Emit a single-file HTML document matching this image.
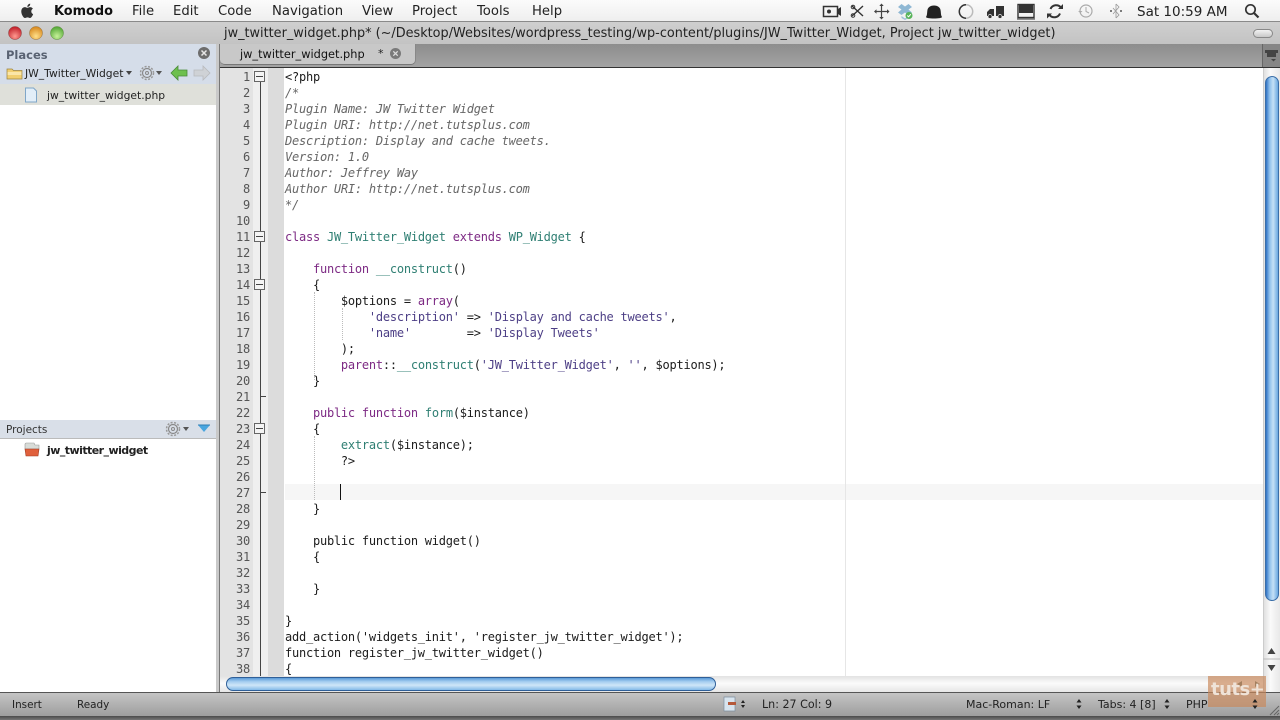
<!DOCTYPE html>
<html><head><meta charset="utf-8"><style>
html,body{margin:0;padding:0;width:1280px;height:720px;overflow:hidden;background:#fff}
body{position:relative;font-family:"DejaVu Sans","Liberation Sans",sans-serif;color:#222}
.a{position:absolute}
.t{position:absolute;white-space:pre;line-height:16px}
.m{font-size:13.2px;top:4px;color:#222}
pre{margin:0;font-family:"DejaVu Sans Mono","Liberation Mono",monospace;font-size:12px;letter-spacing:-.235px;line-height:16px;position:absolute}
.k{color:#7d2a84}.f{color:#2f7f73}.s{color:#4d3f86}.c{color:#666;font-style:italic}.d{color:#1c1c1c}
.s1{font-size:11px;color:#222}
</style></head><body>
<!-- menu bar -->
<div class="a" style="left:0;top:0;width:1280px;height:22px;background:linear-gradient(#fbfbfb,#eeeeee)"></div>
<svg class="a" style="left:19px;top:2px" width="18" height="18" viewBox="0 0 18 18"><path d="M12.3 9.4c0-1.8 1.5-2.7 1.6-2.8-.9-1.3-2.2-1.4-2.7-1.5-1.1-.1-2.2.7-2.8.7s-1.5-.7-2.4-.7C4.700 5.100 3.500 5.800 2.900 6.900 1.600 9.100 2.600 12.400 3.800 14.200c.6.900 1.400 1.900 2.300 1.800.9 0 1.300-.6 2.400-.6s1.400.6 2.400.6 1.600-.9 2.200-1.800c.7-1 1-2 1-2.100-.1 0-1.800-.7-1.800-2.700zM10.500 3.900c.5-.6.800-1.400.7-2.300-.7 0-1.600.5-2.100 1.100-.5.5-.9 1.400-.8 2.200.8.100 1.700-.4 2.200-1z" fill="#333"/></svg>
<div class="t m" style="left:54px;font-weight:bold;font-size:12.900px;color:#111">Komodo</div>
<div class="t m" style="left:132px">File</div>
<div class="t m" style="left:173px">Edit</div>
<div class="t m" style="left:218px">Code</div>
<div class="t m" style="left:272px">Navigation</div>
<div class="t m" style="left:362px">View</div>
<div class="t m" style="left:412px">Project</div>
<div class="t m" style="left:477px">Tools</div>
<div class="t m" style="left:532px">Help</div>
<!-- status icons -->
<svg class="a" style="left:820px;top:0" width="330" height="22" viewBox="820 0 330 22">
<rect x="823.500" y="6.500" width="14" height="10" fill="none" stroke="#333" stroke-width="1.500"/><circle cx="829" cy="11.500" r="2" fill="#333"/><path d="M838 9l3-2v9l-3-2z" fill="#333"/>
<path d="M852 6l11 10M863 6l-11 10" stroke="#333" stroke-width="1.400"/><circle cx="853" cy="15.500" r="1.800" fill="none" stroke="#333"/><circle cx="853" cy="7" r="1.800" fill="none" stroke="#333"/>
<path d="M881.500 4.500v14M875 11.500h14" stroke="#444" stroke-width="1.200"/><path d="M881.500 3.500l-2.200 2.500h4.400zM881.500 19.500l-2.200-2.500h4.400zM874 11.500l2.500-2.200v4.400zM889.500 11.500l-2.500-2.200v4.400z" fill="#444"/>
<path d="M898 7l3.500-3 3.500 2.500L908.500 4l3.500 3-3.500 2.500 3.500 3-3.500 2.500-3.500-2.500-3.500 2.500-3.500-2.500 3.500-3z" fill="#8fb8d4"/><path d="M901.500 16l3.500 2.500 3.500-2.500v2l-3.500 2-3.500-2z" fill="#9cc0d8"/><circle cx="909" cy="15.500" r="3.500" fill="#58b45a"/><path d="M907.300 15.500l1.300 1.300 2.200-2.600" stroke="#fff" stroke-width="1" fill="none"/>
<path d="M926 17c1-1.500 1-3 1.300-6 .3-3.500 2.700-5.500 6.700-5.500s6.400 2 6.700 5.500c.3 3 .3 4.500 1.300 6 0 1-3.500 1.500-8 1.500s-8-.5-8-1.500z" fill="#222"/>
<circle cx="966" cy="11.500" r="6.700" fill="none" stroke="#bbb" stroke-width="1.500"/><path d="M966 4.800a6.700 6.700 0 0 0 0 13.400" fill="none" stroke="#333" stroke-width="1.500"/>
<path d="M996 6h8v10h-8zM994 9h-4l-3 3v4h7z" fill="#333"/><circle cx="990" cy="16.500" r="2" fill="#333" stroke="#eee" stroke-width=".7"/><circle cx="1000" cy="16.500" r="2" fill="#333" stroke="#eee" stroke-width=".7"/>
<rect x="1018" y="4.500" width="16" height="13" fill="none" stroke="#333" stroke-width="1.400"/><rect x="1019" y="5" width="14" height="8" fill="#333"/><path d="M1017 19h18" stroke="#333"/>
<path d="M1061 7.500a6.200 6.200 0 0 0-10.500 1.500M1049.500 15a6.200 6.200 0 0 0 10.500-1.500" fill="none" stroke="#333" stroke-width="2"/><path d="M1058 9h5V4zM1052 13.500h-5v5z" fill="#333"/>
<circle cx="1086" cy="11" r="6" fill="none" stroke="#aaa" stroke-width="1.200"/><path d="M1086 7v4.500l3 1.500" fill="none" stroke="#aaa"/><path d="M1078 11l2.500 2 2-2z" fill="#aaa"/>
<path d="M1116 4v14M1116 4l3 3-6 7M1116 18l3-3-6-7" fill="none" stroke="#999" stroke-width=".8"/><circle cx="1111" cy="11" r="1" fill="#555"/><circle cx="1121" cy="11" r="1" fill="#555"/>
</svg>
<div class="t m" style="left:1137px;font-size:13.500px;color:#222">Sat 10:59 AM</div>
<svg class="a" style="left:1244px;top:3px" width="16" height="16" viewBox="0 0 16 16"><circle cx="6.500" cy="6.500" r="4.700" fill="none" stroke="#333" stroke-width="1.700"/><path d="M10 10l4.500 4.500" stroke="#333" stroke-width="2.200"/></svg>
<div class="a" style="left:0;top:21px;width:1280px;height:1px;background:#8a8a8a"></div>
<!-- title bar -->
<div class="a" style="left:0;top:22px;width:1280px;height:22px;background:linear-gradient(#cfcfcf,#c3c3c3)"></div>
<svg class="a" style="left:6px;top:24px" width="60" height="18" viewBox="0 0 60 18"><defs>
<radialGradient id="r" cx=".5" cy=".75" r=".7"><stop offset="0" stop-color="#ff9a90"/><stop offset="1" stop-color="#c2202a"/></radialGradient>
<radialGradient id="y" cx=".5" cy=".75" r=".7"><stop offset="0" stop-color="#ffe08a"/><stop offset="1" stop-color="#d88a20"/></radialGradient>
<radialGradient id="g" cx=".5" cy=".75" r=".7"><stop offset="0" stop-color="#c8f29a"/><stop offset="1" stop-color="#55a838"/></radialGradient></defs>
<circle cx="9" cy="9" r="6.500" fill="url(#r)" stroke="#8a3a3a" stroke-width=".5"/><circle cx="30" cy="9" r="6.500" fill="url(#y)" stroke="#96703a" stroke-width=".5"/><circle cx="51" cy="9" r="6.500" fill="url(#g)" stroke="#5a8a3a" stroke-width=".5"/></svg>
<div class="t" style="left:224px;top:25.500px;font-size:12.850px;color:#222">jw_twitter_widget.php* (~/Desktop/Websites/wordpress_testing/wp-content/plugins/JW_Twitter_Widget, Project jw_twitter_widget)</div>
<div class="a" style="left:1253px;top:29px;width:18px;height:7px;border:1px solid #888;border-radius:5px;background:linear-gradient(#f2f2f2,#c8c8c8)"></div>
<!-- left pane -->
<div class="a" style="left:0;top:44px;width:216px;height:41px;background:#d5dde9"></div>
<div class="t" style="left:6px;top:47px;font-size:11.500px;font-weight:bold;color:#596272">Places</div>
<svg class="a" style="left:197px;top:46px" width="14" height="14" viewBox="0 0 14 14"><circle cx="7" cy="7" r="6" fill="#6d6d6d"/><path d="M4.500 4.500l5 5M9.500 4.500l-5 5" stroke="#e6e6e6" stroke-width="1.500"/></svg>
<svg class="a" style="left:6px;top:66px" width="17" height="14" viewBox="0 0 17 14"><path d="M1 3h5l1.500 1.500H16V13H1z" fill="#f1cf70" stroke="#9a8240" stroke-width=".7"/><path d="M1.500 6h14v3h-14z" fill="#fae6a8"/></svg>
<div class="t" style="left:25px;top:66px;font-size:10.750px">JW_Twitter_Widget</div>
<div class="a" style="left:126px;top:71px;border:3px solid transparent;border-top:4px solid #444"></div>
<svg class="a" style="left:139px;top:65px" width="16" height="16" viewBox="0 0 16 16"><circle cx="8" cy="8" r="4.500" fill="none" stroke="#888" stroke-width="1.200"/><circle cx="8" cy="8" r="6.500" fill="none" stroke="#999" stroke-width="1.500" stroke-dasharray="2 1.500"/><circle cx="8" cy="8" r="1.500" fill="none" stroke="#888"/></svg>
<div class="a" style="left:156px;top:71px;border:3px solid transparent;border-top:4px solid #555"></div>
<svg class="a" style="left:170px;top:65px" width="18" height="16" viewBox="0 0 18 16"><path d="M1 8l7-7v4h9v6H8v4z" fill="#6ec04e" stroke="#4a8a3a" stroke-width=".8"/></svg>
<svg class="a" style="left:193px;top:65px" width="18" height="16" viewBox="0 0 18 16"><path d="M17 8l-7-7v4H1v6h9v4z" fill="#cfd2d6" stroke="#b8babd" stroke-width=".8"/></svg>
<div class="a" style="left:0;top:84px;width:216px;height:21px;background:#dfe0da"></div>
<div class="a" style="left:0;top:105px;width:216px;height:315px;background:#fff"></div>
<svg class="a" style="left:24px;top:87px" width="14" height="16" viewBox="0 0 14 16"><path d="M1.500 1h8l3 3v11h-11z" fill="#e2eef8" stroke="#7fa6c8"/></svg>
<div class="t" style="left:47px;top:88px;font-size:10.750px">jw_twitter_widget.php</div>
<div class="a" style="left:0;top:420px;width:216px;height:19px;background:#d9dfe8;border-bottom:1px solid #bbb;box-sizing:border-box"></div>
<div class="t" style="left:6px;top:422px;font-size:10.500px;color:#333">Projects</div>
<svg class="a" style="left:165px;top:421px" width="16" height="16" viewBox="0 0 16 16"><circle cx="8" cy="8" r="4.500" fill="none" stroke="#888" stroke-width="1.200"/><circle cx="8" cy="8" r="6.500" fill="none" stroke="#999" stroke-width="1.500" stroke-dasharray="2 1.500"/><circle cx="8" cy="8" r="1.500" fill="none" stroke="#888"/></svg>
<div class="a" style="left:183px;top:427px;border:3px solid transparent;border-top:4px solid #555"></div>
<svg class="a" style="left:197px;top:424px" width="14" height="10" viewBox="0 0 14 10"><path d="M1 1h12L7 8z" fill="#4aa6df"/><path d="M1 1h12" stroke="#2f7fb5"/></svg>
<div class="a" style="left:0;top:439px;width:216px;height:253px;background:#fff"></div>
<svg class="a" style="left:24px;top:442px" width="16" height="15" viewBox="0 0 16 15"><path d="M2 1h8l1 2h4v4H1V2z" fill="#d8dcd8" stroke="#999" stroke-width=".6"/><path d="M1 7h14l-1 7H2z" fill="#e0603c" stroke="#a03a20" stroke-width=".6"/></svg>
<div class="t" style="left:47px;top:443px;font-size:11px;font-weight:bold;letter-spacing:-.55px;color:#222">jw_twitter_widget</div>
<!-- splitter -->
<div class="a" style="left:216px;top:44px;width:3px;height:648px;background:#c9c9c9;border-right:1px solid #777"></div>
<!-- tab bar -->
<div class="a" style="left:220px;top:44px;width:1060px;height:24px;background:linear-gradient(#8d8d8d,#a3a3a3);border-bottom:1px solid #333;box-sizing:border-box"></div>
<div class="a" style="left:220px;top:44px;width:196px;height:21px;background:#c8c8c8;border-radius:0 0 5px 5px;border-bottom:1px solid #777;border-right:1px solid #888;box-sizing:border-box"></div>
<div class="t" style="left:240px;top:45.500px;font-size:11.350px;color:#111">jw_twitter_widget.php</div>
<div class="t" style="left:378px;top:45.500px;font-size:11px">*</div>
<svg class="a" style="left:388.500px;top:47px" width="13" height="13" viewBox="0 0 13 13"><circle cx="6.500" cy="6.500" r="5.500" fill="#7a7a7a"/><path d="M4.300 4.300l4.400 4.400M8.700 4.300l-4.400 4.400" stroke="#ddd" stroke-width="1.300"/></svg>
<div class="a" style="left:1262px;top:44px;width:18px;height:23px;background:#868686;border-left:1px solid #666;box-sizing:border-box"></div>
<svg class="a" style="left:1263px;top:49px" width="16" height="14" viewBox="0 0 16 14"><path d="M2 1h13v3h-2v4H4V4H2z" fill="#444"/><path d="M8 10h5l-2.500 2.500z" fill="#444"/></svg>
<!-- editor -->
<div class="a" style="left:220px;top:68px;width:1043px;height:608px;background:#fff;overflow:hidden">
  <div class="a" style="left:0;top:0;width:33px;height:608px;background:#e3e3e3"></div>
  <div class="a" style="left:33px;top:0;width:15px;height:608px;background:#efefef"></div>
  <div class="a" style="left:48px;top:0;width:16px;height:608px;background:#dcdcdc"></div>
  <div class="a" style="left:65px;top:416px;width:978px;height:16px;background:#f6f6f6"></div>
  <div class="a" style="left:625px;top:0;width:1px;height:608px;background:#e6e6e6"></div>
  <div class="a" style="left:40px;top:8px;width:1px;height:600px;background:#444"></div>
  <div class="a" style="left:40px;top:328px;width:6px;height:1px;background:#444"></div>
  <div class="a" style="left:40px;top:424px;width:6px;height:1px;background:#444"></div>
  <div class="a" style="left:34px;top:3px;width:11px;height:11px;background:#f4f4f4;border:1px solid #666;box-sizing:border-box"><div class="a" style="left:1px;top:4px;width:7px;height:1px;background:#444"></div></div>
  <div class="a" style="left:34px;top:163px;width:11px;height:11px;background:#f4f4f4;border:1px solid #666;box-sizing:border-box"><div class="a" style="left:1px;top:4px;width:7px;height:1px;background:#444"></div></div>
  <div class="a" style="left:34px;top:211px;width:11px;height:11px;background:#f4f4f4;border:1px solid #666;box-sizing:border-box"><div class="a" style="left:1px;top:4px;width:7px;height:1px;background:#444"></div></div>
  <div class="a" style="left:34px;top:355px;width:11px;height:11px;background:#f4f4f4;border:1px solid #666;box-sizing:border-box"><div class="a" style="left:1px;top:4px;width:7px;height:1px;background:#444"></div></div>
  <div class="a" style="left:94px;top:224px;width:0;height:88px;border-left:1px dotted #bbb"></div>
  <div class="a" style="left:122px;top:240px;width:0;height:32px;border-left:1px dotted #bbb"></div>
  <div class="a" style="left:94px;top:368px;width:0;height:64px;border-left:1px dotted #bbb"></div>
  <div class="a" style="left:120px;top:416px;width:1px;height:16px;background:#111"></div>
<pre style="left:0;top:1px;width:30px;text-align:right;color:#555">1
2
3
4
5
6
7
8
9
10
11
12
13
14
15
16
17
18
19
20
21
22
23
24
25
26
27
28
29
30
31
32
33
34
35
36
37
38</pre>
<pre class="d" style="left:65px;top:1px">&lt;?php
<span class="c">/*
Plugin Name: JW Twitter Widget
Plugin URI: http://net.tutsplus.com
Description: Display and cache tweets.
Version: 1.0
Author: Jeffrey Way
Author URI: http://net.tutsplus.com
*/</span>

<span class="k">class</span> <span class="f">JW_Twitter_Widget</span> <span class="k">extends</span> <span class="f">WP_Widget</span> {

    <span class="k">function</span> <span class="f">__construct</span>()
    {
        $options = <span class="k">array</span>(
            <span class="s">'description'</span> =&gt; <span class="s">'Display and cache tweets'</span>,
            <span class="s">'name'</span>        =&gt; <span class="s">'Display Tweets'</span>
        );
        <span class="k">parent</span>::<span class="f">__construct</span>(<span class="s">'JW_Twitter_Widget'</span>, <span class="s">''</span>, $options);
    }

    <span class="k">public</span> <span class="k">function</span> <span class="f">form</span>($instance)
    {
        <span class="f">extract</span>($instance);
        ?&gt;


    }

    public function widget()
    {

    }

}
add_action('widgets_init', 'register_jw_twitter_widget');
function register_jw_twitter_widget()
{</pre>
</div>
<!-- vertical scrollbar -->
<div class="a" style="left:1263px;top:68px;width:17px;height:624px;background:linear-gradient(90deg,#e0e0e0,#fafafa 40%,#e8e8e8);border-left:1px solid #ccc;box-sizing:border-box"></div>
<div class="a" style="left:1265px;top:76px;width:14px;height:525px;border-radius:7px;background:linear-gradient(90deg,#2f72c4,#8fc0ec 30%,#c4e0f6 60%,#6aa8e0);border:1px solid #3a6ea8;box-sizing:border-box"></div>
<svg class="a" style="left:1263px;top:642px" width="17" height="34" viewBox="0 0 17 34"><path d="M0 17h17" stroke="#bbb"/><path d="M8.500 6l4 6h-8z" fill="#444"/><path d="M8.500 29l4-6h-8z" fill="#444"/></svg>
<!-- horizontal scrollbar -->
<div class="a" style="left:220px;top:676px;width:1043px;height:16px;background:linear-gradient(#e2e2e2,#fbfbfb 45%,#e6e6e6)"></div>
<div class="a" style="left:226px;top:677px;width:490px;height:14px;border-radius:7px;background:linear-gradient(#5a9ad8,#a4cdf0 30%,#cfe6f8 60%,#84bae8);border:1px solid #2f5f98;box-sizing:border-box"></div>
<!-- status bar -->
<div class="a" style="left:0;top:692px;width:1280px;height:24px;background:linear-gradient(#c4c4c4,#9e9e9e);border-top:1px solid #555;box-sizing:border-box"></div>
<div class="a" style="left:0;top:716px;width:1280px;height:4px;background:linear-gradient(#4a4a4a,#777)"></div>
<div class="t s1" style="left:12px;top:696.500px;font-size:10.400px">Insert</div>
<div class="t s1" style="left:77px;top:696.500px;font-size:10.400px">Ready</div>
<svg class="a" style="left:722px;top:695px" width="24" height="18" viewBox="0 0 24 18"><path d="M2 2h11v14H2z" fill="#d8e4ee" stroke="#7f8f9f" stroke-width=".7"/><path d="M6 7h8v3H6z" fill="#b5593a"/><path d="M21 5l-2 3h4zM21 13l-2-3h4z" fill="#222"/></svg>
<div class="t s1" style="left:762px;top:696.500px;font-size:11.100px">Ln: 27 Col: 9</div>
<div class="t s1" style="left:966px;top:696.500px">Mac-Roman: LF</div>
<svg class="a" style="left:1075px;top:698px" width="8" height="12" viewBox="0 0 8 12"><path d="M4 1l-2.500 3.500h5zM4 11L1.500 7.500h5z" fill="#222"/></svg>
<div class="t s1" style="left:1098px;top:696.500px">Tabs: 4 [8]</div>
<svg class="a" style="left:1163px;top:698px" width="8" height="12" viewBox="0 0 8 12"><path d="M4 1l-2.500 3.500h5zM4 11L1.500 7.500h5z" fill="#222"/></svg>
<div class="t s1" style="left:1186px;top:696.500px">PHP</div>
<!-- watermark -->
<div class="a" style="left:1208px;top:676px;width:58px;height:31px;background:rgba(200,135,90,.68)"></div>
<svg class="a" style="left:1236px;top:680px" width="26" height="9" viewBox="0 0 26 9"><path d="M6 1v6L1 4zM19 1v6l5-3z" fill="#a5805f"/></svg>
<div class="t" style="left:1211px;top:682px;font-size:18px;font-weight:bold;color:#efe3d8;letter-spacing:-.5px">tuts+</div>
<svg class="a" style="left:1251px;top:698px" width="8" height="12" viewBox="0 0 8 12"><path d="M4 1l-2.500 3.500h5zM4 11L1.500 7.500h5z" fill="#222"/></svg>
<svg class="a" style="left:1268px;top:704px" width="12" height="12" viewBox="0 0 12 12"><path d="M11 2L2 11M11 6l-5 5M11 9l-2 2" stroke="#666"/></svg>
</body></html>
